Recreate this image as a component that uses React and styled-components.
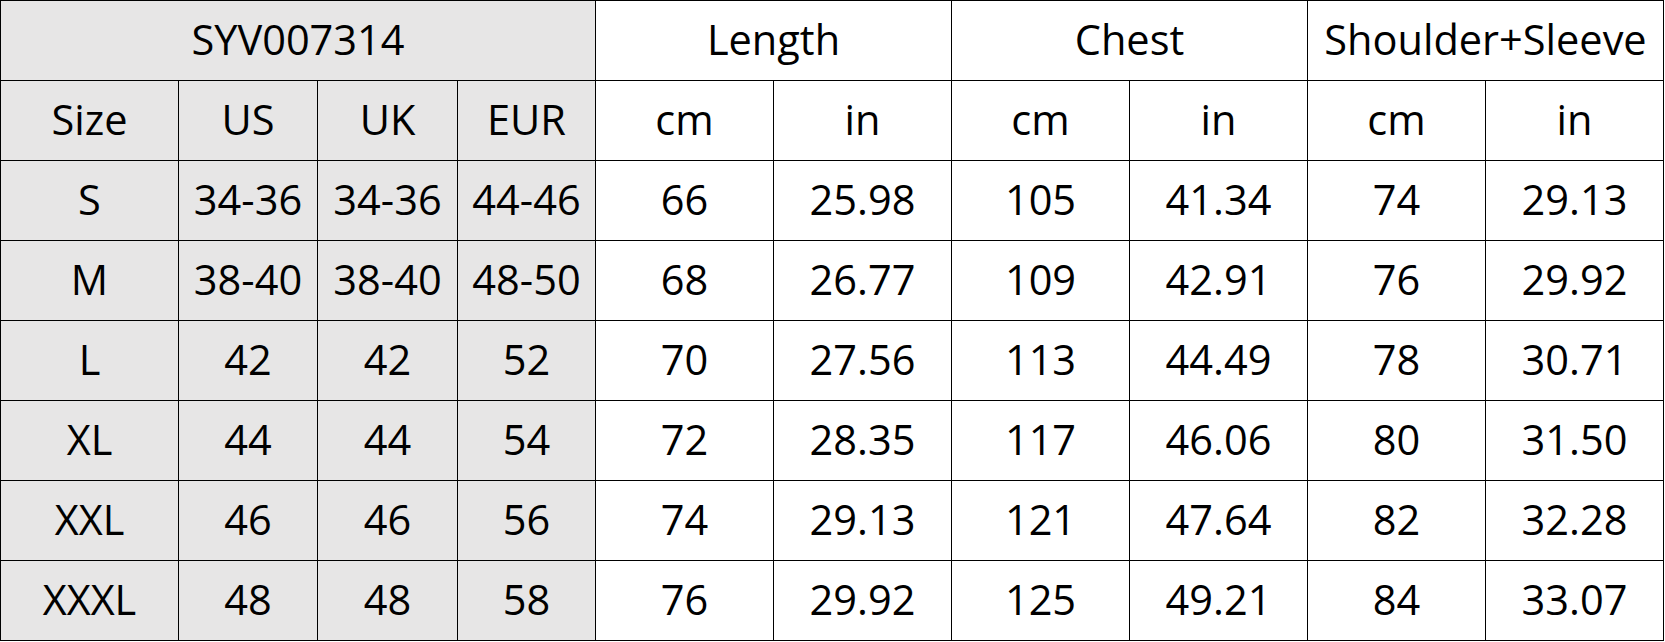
import React from "react"
import styled, { createGlobalStyle } from "styled-components"

const Global = createGlobalStyle`
  html, body {
    margin: 0;
    padding: 0;
    background: #ffffff;
  }
`

const Grid = styled.div`
  display: grid;
  grid-template-columns: 177px 138px 139px 137px repeat(6, 177px);
  grid-auto-rows: 79px;
  gap: 1px;
  padding: 1px;
  background: #000000;
  width: max-content;
  font-family: "Open Sans", "Noto Sans", sans-serif;
  font-size: 41.5px;
  color: #000000;
`

const Cell = styled.div`
  display: flex;
  align-items: center;
  justify-content: center;
  background: ${(p) => (p.$shaded ? "#e7e6e6" : "#ffffff")};
  grid-column: span ${(p) => p.$span || 1};
  white-space: nowrap;
  line-height: 1;
  padding-bottom: 1px;
`

const rows = [
  ["S", "34-36", "34-36", "44-46", "66", "25.98", "105", "41.34", "74", "29.13"],
  ["M", "38-40", "38-40", "48-50", "68", "26.77", "109", "42.91", "76", "29.92"],
  ["L", "42", "42", "52", "70", "27.56", "113", "44.49", "78", "30.71"],
  ["XL", "44", "44", "54", "72", "28.35", "117", "46.06", "80", "31.50"],
  ["XXL", "46", "46", "56", "74", "29.13", "121", "47.64", "82", "32.28"],
  ["XXXL", "48", "48", "58", "76", "29.92", "125", "49.21", "84", "33.07"],
]

const App = () => {
  return (
    <>
      <Global />
      <Grid>
        <Cell $shaded $span={4}>SYV007314</Cell>
        <Cell $span={2}>Length</Cell>
        <Cell $span={2}>Chest</Cell>
        <Cell $span={2}>Shoulder+Sleeve</Cell>

        <Cell $shaded>Size</Cell>
        <Cell $shaded>US</Cell>
        <Cell $shaded>UK</Cell>
        <Cell $shaded>EUR</Cell>
        <Cell>cm</Cell>
        <Cell>in</Cell>
        <Cell>cm</Cell>
        <Cell>in</Cell>
        <Cell>cm</Cell>
        <Cell>in</Cell>

        {rows.map((row) =>
          row.map((val, i) => (
            <Cell key={row[0] + i} $shaded={i < 4}>
              {val}
            </Cell>
          ))
        )}
      </Grid>
    </>
  )
}

export default App
